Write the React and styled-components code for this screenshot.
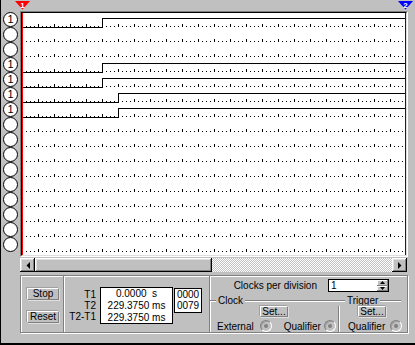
import React from 'react';
import styled, { createGlobalStyle, css } from 'styled-components';

const Global = createGlobalStyle`
  html, body { margin: 0; padding: 0; background: #c0c0c0; }
  body { font-family: "Liberation Sans", Arial, sans-serif; font-size: 10px; color: #000; }
  * { box-sizing: border-box; }
`;

const raised = css`
  background: #c0c0c0;
  box-shadow: inset -1px -1px #000, inset 1px 1px #fff, inset -2px -2px #808080, inset 2px 2px #dfdfdf;
`;

const Window = styled.div`
  width: 415px;
  height: 345px;
  background: #c0c0c0;
  border-left: 1px solid #000;
  border-bottom: 2px solid #000;
  display: flex;
  flex-direction: column;
  overflow: hidden;
`;

const TopArea = styled.div`
  display: flex;
  height: 258px;
`;

const LabelCol = styled.div`
  width: 19px;
  padding: 12px 0 0 2px;
  display: flex;
  flex-direction: column;
`;

const Channel = styled.div`
  width: 15px;
  height: 15px;
  border: 1px solid #000;
  border-radius: 50%;
  background: #fff;
  display: flex;
  align-items: center;
  justify-content: center;
  font-size: 11px;
  line-height: 1;
`;

const ScopeCol = styled.div`
  width: 388px;
  display: flex;
  flex-direction: column;
`;

const MarkerStrip = styled.div`
  height: 11px;
  position: relative;
`;

const Marker = styled.svg`
  position: absolute;
  top: 1px;
  left: ${(p) => p.$x}px;
`;

const ScopeFrame = styled.div`
  height: 246px;
  border: 1px solid;
  border-color: #808080 #fff #fff #808080;
`;

const ScopeInner = styled.div`
  height: 100%;
  border: 1px solid;
  border-color: #000 #dfdfdf #dfdfdf #000;
  background: #fff;
  svg { display: block; }
`;

const ScrollBar = styled.div`
  margin-left: 19px;
  width: 387px;
  height: 14px;
  display: flex;
`;

const ScrollBtn = styled.div`
  ${raised};
  width: 15px;
  height: 14px;
  display: flex;
  align-items: center;
  justify-content: center;
`;

const Thumb = styled.div`
  ${raised};
  width: ${(p) => p.$w}px;
  height: 14px;
`;

const Track = styled.div`
  flex: 1;
  height: 14px;
  background: repeating-conic-gradient(#c0c0c0 0% 25%, #fff 0% 50%) 0 0 / 2px 2px;
`;

const BottomPanel = styled.div`
  margin: 3px 0 0 19px;
  width: 388px;
  height: 58px;
  display: flex;
  border: 1px solid #808080;
  box-shadow: inset 1px 1px #fff, 1px 1px #fff;
`;

const Section = styled.div`
  width: ${(p) => p.$w}px;
  flex: ${(p) => (p.$w ? 'none' : 1)};
  border-right: ${(p) => (p.$divider ? '1px solid #808080' : 'none')};
  box-shadow: ${(p) => (p.$divider ? '1px 0 0 #fff' : 'none')};
  display: flex;
`;

const ButtonStack = styled.div`
  display: flex;
  flex-direction: column;
  gap: 11px;
  padding: 12px 0 0 6px;
`;

const Btn = styled.div`
  width: ${(p) => p.$w}px;
  height: ${(p) => p.$h}px;
  display: flex;
  align-items: center;
  justify-content: center;
  background: #c0c0c0;
  border: 1px solid;
  border-color: #fff #808080 #808080 #fff;
  box-shadow: 1px 1px 0 #dfdfdf, -1px -1px 0 #a0a0a0;
  line-height: 1;
`;

const TimeLabels = styled.div`
  width: 32px;
  padding-top: 13px;
  text-align: right;
  line-height: 11px;
`;

const ValueBox = styled.div`
  margin: 11px 0 0 4px;
  width: 73px;
  height: 37px;
  border: 1px solid #000;
  background: #fff;
  text-align: center;
  line-height: 12px;
  white-space: pre;
`;

const CountBox = styled.div`
  margin: 12px 0 0 1px;
  width: 28px;
  height: 25px;
  border: 1px solid #000;
  background: #fff;
  text-align: center;
  line-height: 11px;
`;

const RightCol = styled.div`
  flex: 1;
  display: flex;
  flex-direction: column;
`;

const DivisionRow = styled.div`
  display: flex;
  align-items: center;
  justify-content: flex-end;
  gap: 11px;
  padding: 3px 18px 0 0;
  height: 16px;
`;

const SpinInput = styled.div`
  width: 61px;
  height: 13px;
  border: 1px solid #000;
  background: #fff;
  display: flex;
  line-height: 11px;
`;

const SpinText = styled.div`
  flex: 1;
  padding-left: 2px;
`;

const SpinBtns = styled.div`
  width: 11px;
  display: flex;
  flex-direction: column;
`;

const SpinBtn = styled.div`
  flex: 1;
  background: #c0c0c0;
  box-shadow: inset -1px -1px #808080, inset 1px 1px #fff;
  display: flex;
  align-items: center;
  justify-content: center;
`;

const Groups = styled.div`
  flex: 1;
  display: flex;
  margin-top: 3px;
`;

const Group = styled.div`
  width: ${(p) => (p.$w ? `${p.$w}px` : 'auto')};
  flex: ${(p) => (p.$w ? 'none' : 1)};
  display: flex;
  flex-direction: column;
`;

const GroupHead = styled.div`
  height: 11px;
  display: flex;
  align-items: center;
  padding-right: ${(p) => p.$pr || 0}px;
`;

const Line = styled.div`
  height: 2px;
  border-top: 1px solid #808080;
  border-bottom: 1px solid #fff;
  width: ${(p) => (p.$w ? `${p.$w}px` : 'auto')};
  flex: ${(p) => (p.$w ? 'none' : 1)};
`;

const GroupLabel = styled.span`
  padding: 0 2px;
  line-height: 11px;
`;

const GroupBody = styled.div`
  flex: 1;
  display: flex;
  flex-direction: column;
  border-right: ${(p) => (p.$divider ? '1px solid #808080' : 'none')};
  box-shadow: ${(p) => (p.$divider ? '1px 0 0 #fff' : 'none')};
`;

const SetRow = styled.div`
  padding-left: ${(p) => p.$pl}px;
  display: flex;
`;

const OptionRow = styled.div`
  display: flex;
  align-items: center;
  margin-top: 3px;
  padding-left: ${(p) => p.$pl}px;
  gap: ${(p) => p.$gap || 0}px;
`;

const Option = styled.label`
  display: flex;
  align-items: center;
  gap: ${(p) => p.$gap}px;
  color: #000;
`;

const Radio = styled.span`
  width: 12px;
  height: 12px;
  border-radius: 50%;
  border: 1px solid;
  border-color: #808080 #fff #fff #808080;
  background: #c0c0c0;
  box-shadow: inset 1px 1px #a0a0a0;
  display: flex;
  align-items: center;
  justify-content: center;
  &::after {
    content: '';
    width: 4px;
    height: 4px;
    border-radius: 50%;
    background: #808080;
  }
`;

const ROWS = 16;
const ROW_H = 15;
const W = 384;
const H = 242;
const channels = [1, 0, 0, 1, 1, 1, 1, 0, 0, 0, 0, 0, 0, 0, 0, 0];
const edges = { 0: 80, 3: 80, 4: 80, 5: 96, 6: 96 };

function Waveforms() {
  return (
    <svg width={W} height={H} shapeRendering="crispEdges">
      <defs>
        <pattern id="grid" width="16" height={ROW_H} patternUnits="userSpaceOnUse">
          <rect x="0" y="11" width="1" height="3" fill="#000" />
          <rect x="4" y="13" width="1" height="1" fill="#000" />
          <rect x="8" y="13" width="1" height="1" fill="#000" />
          <rect x="12" y="13" width="1" height="1" fill="#000" />
        </pattern>
      </defs>
      <rect x="0" y="0" width={W} height={H} fill="url(#grid)" />
      {Object.entries(edges).map(([row, t]) => {
        const b = 14 + ROW_H * Number(row) + 0.5;
        return (
          <path
            key={row}
            d={`M0 ${b} H${t + 0.5} V${b - 9} H${W}`}
            stroke="#000"
            strokeWidth="1"
            fill="none"
          />
        );
      })}
      <rect x="0" y="0" width="1" height={H} fill="#f00" />
      <rect x={W - 1} y="0" width="1" height={H} fill="#00f" />
    </svg>
  );
}

function CursorMarker({ x, color, label }) {
  return (
    <Marker $x={x} width="16" height="9" viewBox="0 0 16 9">
      <polygon points="0,0 15,0 7.5,8.5" fill={color} />
      <text x="7.5" y="7" textAnchor="middle" fontSize="8" fontWeight="bold" fill="#fff" fontFamily="Liberation Sans, Arial, sans-serif">
        {label}
      </text>
    </Marker>
  );
}

export default function App() {
  return (
    <>
      <Global />
      <Window>
        <TopArea>
          <LabelCol>
            {channels.map((c, i) => (
              <Channel key={i}>{c ? '1' : ''}</Channel>
            ))}
          </LabelCol>
          <ScopeCol>
            <MarkerStrip>
              <CursorMarker x={-5} color="#f00" label="1" />
              <CursorMarker x={378} color="#00f" label="2" />
            </MarkerStrip>
            <ScopeFrame>
              <ScopeInner>
                <Waveforms />
              </ScopeInner>
            </ScopeFrame>
          </ScopeCol>
        </TopArea>

        <ScrollBar>
          <ScrollBtn>
            <svg width="4" height="7"><polygon points="4,0 4,7 0.5,3.5" fill="#000" /></svg>
          </ScrollBtn>
          <Thumb $w={177} />
          <Track />
          <ScrollBtn>
            <svg width="4" height="7"><polygon points="0,0 0,7 3.5,3.5" fill="#000" /></svg>
          </ScrollBtn>
        </ScrollBar>

        <BottomPanel>
          <Section $w={43} $divider>
            <ButtonStack>
              <Btn $w={32} $h={12}>Stop</Btn>
              <Btn $w={32} $h={12}>Reset</Btn>
            </ButtonStack>
          </Section>
          <Section $w={146} $divider>
            <TimeLabels>
              <div>T1</div>
              <div>T2</div>
              <div>T2-T1</div>
            </TimeLabels>
            <ValueBox>
              <div>{'0.0000  s'}</div>
              <div>229.3750 ms</div>
              <div>229.3750 ms</div>
            </ValueBox>
            <CountBox>
              <div>0000</div>
              <div>0079</div>
            </CountBox>
          </Section>
          <RightCol>
            <DivisionRow>
              <span>Clocks per division</span>
              <SpinInput>
                <SpinText>1</SpinText>
                <SpinBtns>
                  <SpinBtn>
                    <svg width="5" height="3"><polygon points="2.5,0 5,3 0,3" fill="#000" /></svg>
                  </SpinBtn>
                  <SpinBtn>
                    <svg width="5" height="3"><polygon points="0,0 5,0 2.5,3" fill="#000" /></svg>
                  </SpinBtn>
                </SpinBtns>
              </SpinInput>
            </DivisionRow>
            <Groups>
              <Group $w={129}>
                <GroupHead>
                  <Line $w={6} />
                  <GroupLabel>Clock</GroupLabel>
                  <Line />
                </GroupHead>
                <GroupBody $divider>
                  <SetRow $pl={50}>
                    <Btn $w={28} $h={11}>Set...</Btn>
                  </SetRow>
                  <OptionRow $pl={7} $gap={12}>
                    <Option $gap={6}>External<Radio /></Option>
                    <Option $gap={3}>Qualifier<Radio /></Option>
                  </OptionRow>
                </GroupBody>
              </Group>
              <Group>
                <GroupHead $pr={6}>
                  <Line $w={6} />
                  <GroupLabel>Trigger</GroupLabel>
                  <Line />
                </GroupHead>
                <GroupBody>
                  <SetRow $pl={19}>
                    <Btn $w={28} $h={11}>Set...</Btn>
                  </SetRow>
                  <OptionRow $pl={9}>
                    <Option $gap={5}>Qualifier<Radio /></Option>
                  </OptionRow>
                </GroupBody>
              </Group>
            </Groups>
          </RightCol>
        </BottomPanel>
      </Window>
    </>
  );
}
